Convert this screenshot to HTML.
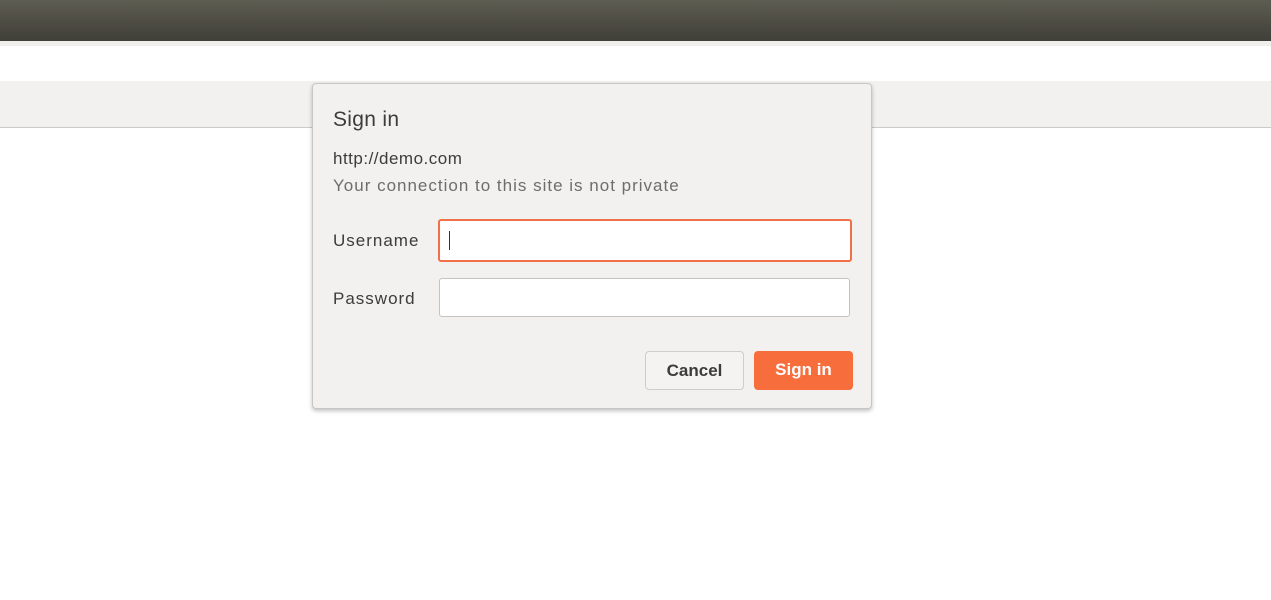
<!DOCTYPE html><html><head><style>
body{margin:0;width:1271px;height:600px;background:#fff;font-family:"Liberation Sans",sans-serif;position:relative;overflow:hidden}
.top{position:absolute;left:0;top:0;width:1271px;height:41px;background:linear-gradient(#5e5d52,#403f38)}
.strip{position:absolute;top:41px;left:0;width:1271px;height:5px;background:#f0efed}
.tb{position:absolute;top:81px;left:0;width:1271px;height:46px;background:#f2f1f0;border-bottom:1px solid #cdcbc8}
.dlg{position:absolute;left:312px;top:83px;width:558px;height:324px;background:#f2f1ef;border:1px solid #c8c6c2;border-radius:4px;box-shadow:0 2px 4px rgba(0,0,0,.25)}
.t{position:absolute;left:20px;color:#3c3c3c;letter-spacing:1px}
.in{position:absolute;left:126px;width:411px;height:39px;background:#fff;border:1px solid #c5c3bf;border-radius:3px;box-sizing:border-box}
.btn{position:absolute;top:267px;height:39px;border-radius:4px;box-sizing:border-box;font-size:17px;font-weight:bold;text-align:center;line-height:37px}
</style></head><body>
<div class="top"></div><div class="strip"></div><div class="tb"></div>
<div class="dlg">
<div class="t" style="top:24px;font-size:21px;letter-spacing:0.3px">Sign in</div>
<div class="t" style="top:65px;font-size:17px;letter-spacing:0.5px">http://demo.com</div>
<div class="t" style="top:92px;font-size:17px;color:#6e6d69">Your connection to this site is not private</div>
<div class="t" style="top:147px;font-size:17px">Username</div>
<div class="t" style="top:205px;font-size:17px">Password</div>
<div class="in" style="top:135px;height:43px;left:125px;width:414px;border:2px solid #f0704a"><div style="position:absolute;left:9px;top:10px;width:1px;height:19px;background:#333"></div></div>
<div class="in" style="top:194px"></div>
<div class="btn" style="left:332px;width:99px;border:1px solid #cfcdca;background:#f4f3f1;color:#3c3c3c">Cancel</div>
<div class="btn" style="left:441px;width:99px;background:#f76d3c;color:#fff">Sign in</div>
</div>
</body></html>
